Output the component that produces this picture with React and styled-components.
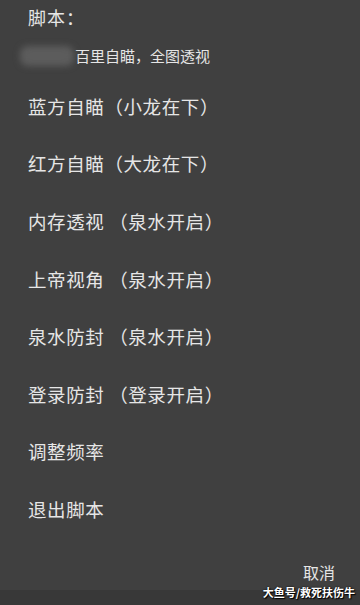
import React from 'react';
import styled, { createGlobalStyle } from 'styled-components';

const GlobalStyle = createGlobalStyle`
  html, body {
    margin: 0;
    padding: 0;
    background: #3f3f3f;
  }
  body {
    font-family: "Noto Sans CJK SC", "Noto Sans", sans-serif;
  }
`;

const Dialog = styled.div`
  position: relative;
  width: 360px;
  height: 605px;
  background: #404040;
  color: #e6e6e6;
  display: flex;
  flex-direction: column;
  overflow: hidden;
`;

const Title = styled.div`
  font-size: 18px;
  line-height: 24px;
  padding: 5px 0 0 28px;
  letter-spacing: 1px;
`;

const Notice = styled.div`
  display: flex;
  align-items: center;
  gap: 1px;
  margin-top: 17px;
  padding-left: 20px;
  font-size: 15px;
  line-height: 20px;
`;

const Blur = styled.div`
  width: 54px;
  height: 20px;
  border-radius: 8px;
  background: #5c5c5c;
  filter: blur(3px);
`;

const Menu = styled.div`
  display: flex;
  flex-direction: column;
  margin-top: 11px;
`;

const Item = styled.div`
  height: 57.6px;
  display: flex;
  align-items: center;
  padding-left: 28px;
  font-size: 18.5px;
  letter-spacing: 0.6px;
  white-space: pre;
`;

const Footer = styled.div`
  display: flex;
  justify-content: flex-end;
  padding: 23px 25px 0 0;
  font-size: 16px;
  line-height: 22px;
`;

const BottomBar = styled.div`
  margin-top: auto;
  height: 15px;
  background: #383838;
`;

const Watermark = styled.div`
  position: absolute;
  right: 5px;
  bottom: 6px;
  font-size: 11px;
  font-weight: bold;
  line-height: 14px;
  color: #ffffff;
  text-shadow: 0 0 2px #000, 1px 1px 1px #000;
`;

const items = [
  '蓝方自瞄（小龙在下）',
  '红方自瞄（大龙在下）',
  '内存透视 （泉水开启）',
  '上帝视角 （泉水开启）',
  '泉水防封 （泉水开启）',
  '登录防封 （登录开启）',
  '调整频率',
  '退出脚本',
];

export default function App() {
  return (
    <>
      <GlobalStyle />
      <Dialog>
        <Title>脚本：</Title>
        <Notice>
          <Blur />
          <span>百里自瞄，全图透视</span>
        </Notice>
        <Menu>
          {items.map((t) => (
            <Item key={t}>{t}</Item>
          ))}
        </Menu>
        <Footer>取消</Footer>
        <BottomBar />
        <Watermark>大鱼号/救死扶伤牛</Watermark>
      </Dialog>
    </>
  );
}
